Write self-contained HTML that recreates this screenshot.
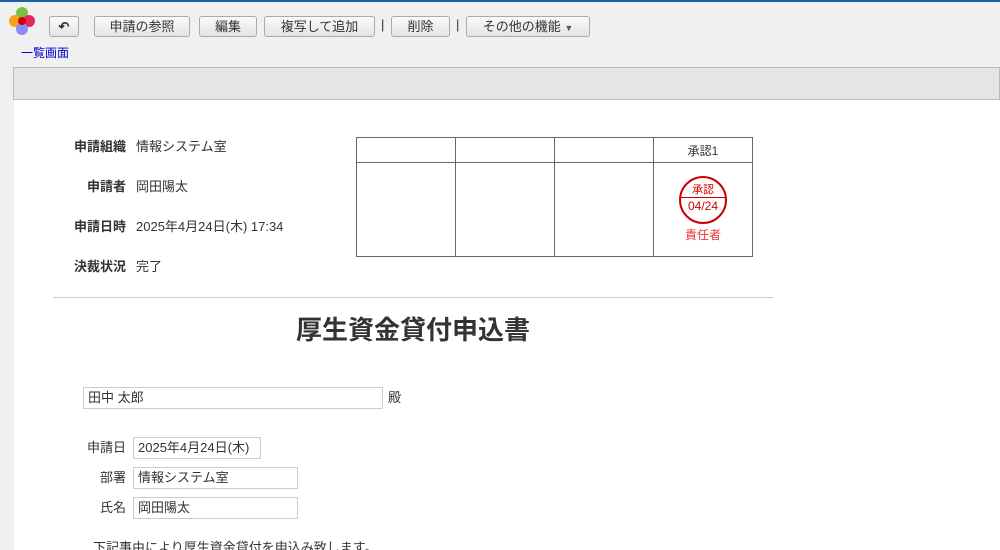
<!DOCTYPE html>
<html><head><meta charset="utf-8"><style>
*{box-sizing:border-box;margin:0;padding:0}
html,body{width:1000px;height:550px;overflow:hidden}
body{background:#f0f0f0;font-family:"Liberation Sans","Noto Sans CJK JP",sans-serif;font-size:13px;color:#333;position:relative}
.a{position:absolute}
.btn{position:absolute;top:16px;height:21px;border:1px solid #aaa;border-radius:3px;background:linear-gradient(#fafafa,#e4e4e4);font-size:13px;text-align:center;line-height:19px;color:#333}
.sep{position:absolute;top:17px;font-size:13px;color:#333}
.lab{position:absolute;font-weight:bold;font-size:13px;text-align:right;width:80px;left:46px}
.val{position:absolute;left:136px;font-size:13px}
.in{position:absolute;border:1px solid #ccc;background:#fff;height:22px;line-height:20px;padding-left:4px;font-size:13px}
table{position:absolute;left:356px;top:137px;border-collapse:collapse}
td{border:1px solid #666;width:99px;text-align:center;font-size:12px}
</style></head><body>
<div class="a" style="left:0;top:0;width:1000px;height:2px;background:#1f5fa8"></div>
<svg class="a" style="left:7px;top:6px" width="30" height="30" viewBox="0 0 30 30">
<circle cx="15" cy="7" r="6" fill="#7ac143"/><circle cx="8" cy="15" r="6" fill="#f7a21b"/><circle cx="22" cy="15" r="6" fill="#e8265e"/><circle cx="15" cy="23" r="6" fill="#8b8bf5"/><circle cx="15" cy="15" r="4" fill="#c00"/></svg>
<div class="btn" style="left:49px;width:30px;font-weight:bold">&#x21B6;</div>
<div class="btn" style="left:94px;width:96px">申請の参照</div>
<div class="btn" style="left:199px;width:58px">編集</div>
<div class="btn" style="left:264px;width:111px">複写して追加</div>
<div class="sep" style="left:381px">|</div>
<div class="btn" style="left:391px;width:59px">削除</div>
<div class="sep" style="left:456px">|</div>
<div class="btn" style="left:466px;width:124px">その他の機能 <span style="font-size:9px;color:#556">▼</span></div>
<div class="a" style="left:21px;top:44px;font-size:12px;color:#00c">一覧画面</div>
<div class="a" style="left:13px;top:67px;width:987px;height:33px;background:#e5e5e5;border:1px solid #bbb"></div>
<div class="a" style="left:14px;top:100px;width:986px;height:450px;background:#fff"></div>
<div class="lab" style="top:136px">申請組織</div><div class="val" style="top:136px">情報システム室</div>
<div class="lab" style="top:176px">申請者</div><div class="val" style="top:176px">岡田陽太</div>
<div class="lab" style="top:216px">申請日時</div><div class="val" style="top:216px">2025年4月24日(木) 17:34</div>
<div class="lab" style="top:256px">決裁状況</div><div class="val" style="top:256px">完了</div>
<table><tr style="height:25px"><td></td><td></td><td></td><td>承認1</td></tr>
<tr style="height:94px"><td></td><td></td><td></td><td style="vertical-align:top;padding-top:13px">
<div style="margin:0 auto;width:48px;height:48px;border:2px solid #c00;border-radius:50%;color:#c00;font-size:11px;line-height:14px;padding-top:5px">承認<div style="border-top:1px solid #c00;font-size:12px;line-height:16px">04/24</div></div>
<div style="color:#e33;font-size:12px;margin-top:2px">責任者</div></td></tr></table>
<div class="a" style="left:53px;top:297px;width:720px;height:1px;background:#ccc"></div>
<div class="a" style="left:53px;top:310px;width:720px;text-align:center;font-size:26px;font-weight:bold;color:#333">厚生資金貸付申込書</div>
<div class="in" style="left:83px;top:387px;width:300px">田中 太郎</div>
<div class="a" style="left:388px;top:387px">殿</div>
<div class="a" style="left:84px;top:437px;width:42px;text-align:right">申請日</div>
<div class="in" style="left:133px;top:437px;width:128px">2025年4月24日(木)</div>
<div class="a" style="left:84px;top:467px;width:42px;text-align:right">部署</div>
<div class="in" style="left:133px;top:467px;width:165px">情報システム室</div>
<div class="a" style="left:84px;top:497px;width:42px;text-align:right">氏名</div>
<div class="in" style="left:133px;top:497px;width:165px">岡田陽太</div>
<div class="a" style="left:93px;top:537px">下記事由により厚生資金貸付を申込み致します。</div>
</body></html>
